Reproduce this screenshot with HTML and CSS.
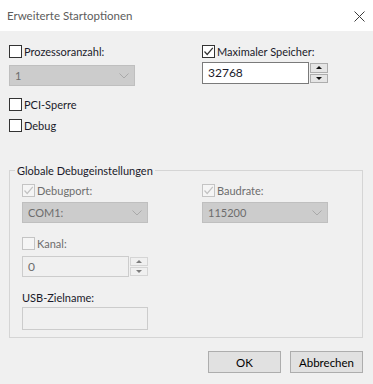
FILE: index.html
```html
<!DOCTYPE html>
<html lang="de">
<head>
  <meta charset="UTF-8">
  <title>Erweiterte Startoptionen</title>
  <link rel="stylesheet" href="styles.css">
</head>
<body>
  <div class="dialog">
    <div class="titlebar">
      <span class="title">Erweiterte Startoptionen</span>
      <svg class="close" width="11" height="11" viewBox="0 0 11 11">
        <path d="M0.5 0.5 L10.5 10.5 M10.5 0.5 L0.5 10.5" stroke="#3c3c3c" stroke-width="1" fill="none"/>
      </svg>
    </div>

    <div class="body">
      <div class="top">
        <div class="col">
          <div class="check row-first">
            <span class="box"></span>
            <span>Prozessoranzahl:</span>
          </div>
          <div class="select disabled sel-cpu">
            <span>1</span>
            <svg width="10" height="6" viewBox="0 0 10 6"><path d="M0.5 0.5 L5 5 L9.5 0.5" stroke="#a9a9a9" fill="none"/></svg>
          </div>
          <div class="check row-pci">
            <span class="box"></span>
            <span>PCI-Sperre</span>
          </div>
          <div class="check row-debug">
            <span class="box"></span>
            <span>Debug</span>
          </div>
        </div>
        <div class="col">
          <div class="check row-first">
            <span class="box">
              <svg width="11" height="11" viewBox="0 0 11 11"><path d="M1.5 5.5 L4.2 8.5 L9.8 1.8" stroke="#333" stroke-width="1.2" fill="none"/></svg>
            </span>
            <span>Maximaler Speicher:</span>
          </div>
          <div class="spin spin-mem">
            <div class="spin-text">32768</div>
            <div class="spin-btns">
              <div class="spin-btn"><span class="tri-up"></span></div>
              <div class="spin-btn"><span class="tri-down"></span></div>
            </div>
          </div>
        </div>
      </div>

      <fieldset class="group">
        <legend>Globale Debugeinstellungen</legend>
        <div class="group-grid">
          <div class="col">
            <div class="check disabled">
              <span class="box">
                <svg width="11" height="11" viewBox="0 0 11 11"><path d="M1.5 5.5 L4.2 8.5 L9.8 1.8" stroke="#c2c2c2" stroke-width="1.2" fill="none"/></svg>
              </span>
              <span>Debugport:</span>
            </div>
            <div class="select disabled sel-group">
              <span>COM1:</span>
              <svg width="10" height="6" viewBox="0 0 10 6"><path d="M0.5 0.5 L5 5 L9.5 0.5" stroke="#a9a9a9" fill="none"/></svg>
            </div>
            <div class="check disabled row-kanal">
              <span class="box"></span>
              <span>Kanal:</span>
            </div>
            <div class="spin disabled spin-kanal">
              <div class="spin-text">0</div>
              <div class="spin-btns">
                <div class="spin-btn"><span class="tri-up"></span></div>
                <div class="spin-btn"><span class="tri-down"></span></div>
              </div>
            </div>
            <div class="label row-usb">USB-Zielname:</div>
            <div class="textbox disabled"></div>
          </div>
          <div class="col">
            <div class="check disabled">
              <span class="box">
                <svg width="11" height="11" viewBox="0 0 11 11"><path d="M1.5 5.5 L4.2 8.5 L9.8 1.8" stroke="#c2c2c2" stroke-width="1.2" fill="none"/></svg>
              </span>
              <span>Baudrate:</span>
            </div>
            <div class="select disabled sel-group">
              <span>115200</span>
              <svg width="10" height="6" viewBox="0 0 10 6"><path d="M0.5 0.5 L5 5 L9.5 0.5" stroke="#a9a9a9" fill="none"/></svg>
            </div>
          </div>
        </div>
      </fieldset>

      <div class="buttons">
        <button class="btn">OK</button>
        <button class="btn">Abbrechen</button>
      </div>
    </div>
  </div>
</body>
</html>
```

FILE: styles.css
```css
* {
  box-sizing: border-box;
}

body {
  margin: 0;
  font-family: Lato, "Liberation Sans", sans-serif;
  font-size: 11px;
  color: #1a1a2a;
  background: #f0f0f0;
}

.dialog {
  width: 373px;
  height: 384px;
  background: #f0f0f0;
}

.titlebar {
  height: 31px;
  background: #fff;
  display: flex;
  align-items: center;
  justify-content: space-between;
  padding: 0 8px 0 7px;
}

.title {
  color: #5c5c5c;
  font-size: 11.5px;
}

.close {
  margin-top: 1px;
}

.body {
  padding: 0 10px 0 9px;
}

.top {
  display: grid;
  grid-template-columns: 193px 1fr;
}

.col {
  display: flex;
  flex-direction: column;
  align-items: flex-start;
}

/* checkboxes */
.check {
  display: flex;
  align-items: center;
  gap: 2px;
  height: 13px;
  line-height: 13px;
  white-space: nowrap;
}

.box {
  width: 13px;
  height: 13px;
  border: 1px solid #333;
  background: #fff;
  display: flex;
  align-items: center;
  justify-content: center;
  flex: none;
}

.check.disabled {
  color: #6d6d6d;
}

.check.disabled .box {
  border-color: #c4c4c4;
  background: #f5f5f5;
}

.row-first {
  margin-top: 14px;
}

.row-pci {
  margin-top: 12px;
}

.row-debug {
  margin-top: 8px;
}

/* drop-down lists */
.select {
  width: 126px;
  height: 21px;
  display: flex;
  align-items: center;
  justify-content: space-between;
  padding: 0 5px 0 5px;
  border: 1px solid #bfbfbf;
  background: #cccccc;
  color: #6d6d6d;
}

.sel-cpu {
  margin-top: 7px;
}

.sel-group {
  margin-top: 5px;
}

/* spinners */
.spin {
  width: 126px;
  height: 22px;
  display: flex;
  gap: 1px;
}

.spin-mem {
  margin-top: 4px;
}

.spin-text {
  flex: 1;
  border: 1px solid #7a7a7a;
  background: #fff;
  padding-left: 5px;
  line-height: 20px;
  font-size: 12px;
}

.spin-btns {
  width: 18px;
  display: flex;
  flex-direction: column;
  gap: 1px;
  padding: 1px 0;
}

.spin-btn {
  flex: 1;
  border: 1px solid #adadad;
  background: #e5e5e5;
  display: flex;
  align-items: center;
  justify-content: center;
}

.tri-up,
.tri-down {
  width: 0;
  height: 0;
  border-left: 3px solid transparent;
  border-right: 3px solid transparent;
}

.tri-up {
  border-bottom: 3px solid #111;
}

.tri-down {
  border-top: 3px solid #111;
}

.spin.disabled {
  height: 21px;
}

.spin.disabled .spin-text {
  border-color: #cccccc;
  background: #f0f0f0;
  color: #6d6d6d;
}

.spin.disabled .spin-btn {
  border-color: #d5d5d5;
  background: #f0f0f0;
}

.spin.disabled .tri-up {
  border-bottom-color: #7d7d7d;
}

.spin.disabled .tri-down {
  border-top-color: #7d7d7d;
}

/* group box */
.group {
  margin: 31px 0 0 0;
  padding: 6px 0 7px 12px;
  border: 1px solid #d5d5d5;
  min-width: 0;
}

.group legend {
  margin-left: -7px;
  padding: 0 2px;
  line-height: 15px;
  font-size: 11px;
}

.group-grid {
  display: grid;
  grid-template-columns: 180px 1fr;
}

.row-kanal {
  margin-top: 14px;
}

.spin-kanal {
  margin-top: 6px;
}

.label {
  line-height: 15px;
}

.row-usb {
  margin-top: 13px;
}

.textbox {
  width: 126px;
  height: 23px;
  margin-top: 2px;
  border: 1px solid #cccccc;
  background: #f0f0f0;
}

/* buttons */
.buttons {
  display: flex;
  justify-content: flex-end;
  gap: 9px;
  margin-top: 13px;
}

.btn {
  width: 73px;
  height: 22px;
  border: 1px solid #adadad;
  background: #e1e1e1;
  font-family: inherit;
  font-size: 11.5px;
  color: #000;
  padding: 0;
}
```
